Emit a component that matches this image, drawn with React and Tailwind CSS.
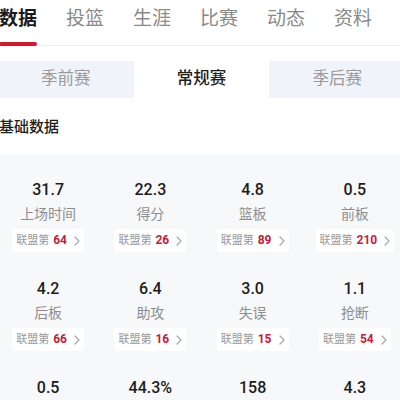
import React from 'react';

const tabs = ['数据', '投篮', '生涯', '比赛', '动态', '资料'];
const seasons = ['季前赛', '常规赛', '季后赛'];

const stats = [
  { value: '31.7', label: '上场时间', rank: 64 },
  { value: '22.3', label: '得分', rank: 26 },
  { value: '4.8', label: '篮板', rank: 89 },
  { value: '0.5', label: '前板', rank: 210 },
  { value: '4.2', label: '后板', rank: 66 },
  { value: '6.4', label: '助攻', rank: 16 },
  { value: '3.0', label: '失误', rank: 15 },
  { value: '1.1', label: '抢断', rank: 54 },
  // bottom row is cut by the viewport, only the numbers show
  { value: '0.5' },
  { value: '44.3%' },
  { value: '158' },
  { value: '4.3' },
];

const Chevron = () => (
  <svg width="6" height="10" viewBox="0 0 6 10" className="ml-[7px]">
    <polyline points="1,1 5,5 1,9" fill="none" stroke="#a8a8a8" strokeWidth="1.2" strokeLinecap="round" strokeLinejoin="round" />
  </svg>
);

const StatCell = ({ stat }) => (
  <div className="flex flex-col items-center">
    <p className="text-[16px] leading-[20px] font-medium text-[#1c1c1c]">{stat.value}</p>
    {stat.label && (
      <>
        <p className="mt-[4px] text-[14px] leading-[20px] text-[#8e8e8e]">{stat.label}</p>
        <div className="mt-[5px] h-[23px] flex items-center bg-white rounded-[3px] px-[4px]">
          <span className="text-[11px] leading-[23px] text-[#9a9a9a]">联盟第</span>
          <span className="ml-[4px] text-[12px] leading-[23px] font-bold text-[#c4203a]">{stat.rank}</span>
          <Chevron />
        </div>
      </>
    )}
  </div>
);

export default function App() {
  return (
    <div
      className="w-[400px] h-[400px] overflow-hidden bg-white"
      style={{ fontFamily: 'Roboto, "Noto Sans CJK SC", sans-serif' }}
    >
      <div className="h-[46px] border-b border-[#eeeeee] flex gap-[29px] -ml-[1px]">
        {tabs.map((t, i) => (
          <div key={t} className="relative h-full">
            <span
              className={`block pt-[5px] text-[19px] leading-[28px] whitespace-nowrap ${
                i === 0 ? 'font-bold text-[#1a1a1a]' : 'text-[#8a8a8a]'
              }`}
            >
              {t}
            </span>
            {i === 0 && (
              <div className="absolute left-0 right-0 bottom-[-1px] h-[4px] rounded-full bg-[#d3182d]" />
            )}
          </div>
        ))}
      </div>

      <div className="mt-[15px] -ml-[2px] w-[407px] h-[37px] grid grid-cols-3 bg-[#f0f3fa]">
        {seasons.map((s, i) => (
          <div
            key={s}
            className={`flex items-center justify-center text-[16.5px] ${
              i === 1 ? 'bg-white text-[#1e1e1e] font-medium' : 'text-[#9a9a9a]'
            }`}
          >
            {s}
          </div>
        ))}
      </div>

      <h3 className="mt-[18px] -ml-[1px] text-[15px] leading-[22px] font-medium text-[#1c1c1c]">基础数据</h3>

      <div className="mt-[16px] bg-[#f7f8fa] pt-[26px] pb-6">
        <div className="-ml-[3px] w-[409px] grid grid-cols-4 gap-y-[27px]">
          {stats.map((s, i) => (
            <StatCell key={i} stat={s} />
          ))}
        </div>
      </div>
    </div>
  );
}
